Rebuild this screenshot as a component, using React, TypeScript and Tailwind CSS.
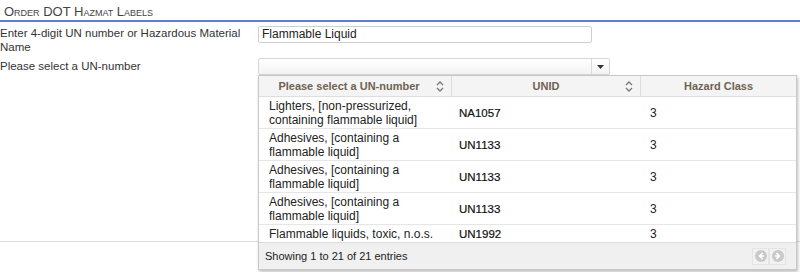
import React from "react";

const rows = [
  { name: "Lighters, [non-pressurized, containing flammable liquid]", unid: "NA1057", cls: "3" },
  { name: "Adhesives, [containing a flammable liquid]", unid: "UN1133", cls: "3" },
  { name: "Adhesives, [containing a flammable liquid]", unid: "UN1133", cls: "3" },
  { name: "Adhesives, [containing a flammable liquid]", unid: "UN1133", cls: "3" },
  { name: "Flammable liquids, toxic, n.o.s.", unid: "UN1992", cls: "3" },
];

function SortIcon() {
  return (
    <svg width="8" height="11" viewBox="0 0 8 11" className="absolute right-[7px] top-[5px]">
      <path d="M1 4 L4 1 L7 4" fill="none" stroke="#777" strokeWidth="1.3" />
      <path d="M1 7 L4 10 L7 7" fill="none" stroke="#777" strokeWidth="1.3" />
    </svg>
  );
}

function NavButton({ dir }: { dir: "left" | "right" }) {
  return (
    <div className="w-[17px] h-[17px] flex items-center justify-center border border-[#e4e4e4] bg-[#f2f2f2]">
      <svg width="12" height="12" viewBox="0 0 12 12">
        <circle cx="6" cy="6" r="6" fill="#c9c9c9" />
        {dir === "left" ? (
          <path d="M7.5 3 L4.5 6 L7.5 9 M4.5 6 H9" fill="none" stroke="#fff" strokeWidth="1.6" />
        ) : (
          <path d="M4.5 3 L7.5 6 L4.5 9 M7.5 6 H3" fill="none" stroke="#fff" strokeWidth="1.6" />
        )}
      </svg>
    </div>
  );
}

export default function App() {
  return (
    <div className="w-[800px] h-[272px] bg-white text-[11px] leading-[14px] text-[#333] font-['Liberation_Sans',Arial,sans-serif] overflow-hidden">
      <div className="h-[22px] border-b-2 border-[#5b80d3] px-[4px] pt-[5px]">
        <span className="text-[13px] leading-[14px] text-[#444] [font-variant:small-caps]">
          Order DOT Hazmat Labels
        </span>
      </div>

      <div className="h-[220px] border-b border-[#dcdcdc] pt-[4px]">
        <div className="grid grid-cols-[258px_1fr]">
          <div className="text-[11.5px]">Enter 4-digit UN number or Hazardous Material Name</div>
          <div>
            <div className="w-[334px] h-[17px] border border-[#cfcfcf] rounded-[2px] px-[3px] text-[12px] leading-[15px] text-[#222]">
              Flammable Liquid
            </div>
          </div>
        </div>

        <div className="grid grid-cols-[258px_1fr] mt-[4px]">
          <div className="pt-[1px] text-[11.5px]">Please select a UN-number</div>
          <div className="relative">
            <div className="w-[352px] h-[17px] border border-[#d6d6d6] rounded-[2px] bg-gradient-to-b from-white to-[#f3f3f3] flex justify-end">
              <div className="w-[18px] h-full border-l border-[#dcdcdc] flex items-center justify-center">
                <svg width="7" height="4" viewBox="0 0 7 4">
                  <path d="M0 0 H7 L3.5 4 Z" fill="#333" />
                </svg>
              </div>
            </div>

            <div className="absolute left-0 top-full z-10 w-[539px] h-[195px] bg-white border border-[#c8c8c8] shadow-[1px_2px_3px_rgba(0,0,0,0.25)] flex flex-col">
              <div className="grid grid-cols-[193px_189px_1fr] h-[21px] bg-[#f4f4f4] border-b border-[#dedede] font-bold text-[#6f6252] shrink-0">
                <div className="relative border-r border-[#dedede] text-center leading-[20px] pr-[12px]">
                  Please select a UN-number
                  <SortIcon />
                </div>
                <div className="relative border-r border-[#dedede] text-center leading-[20px]">
                  UNID
                  <SortIcon />
                </div>
                <div className="text-center leading-[20px]">Hazard Class</div>
              </div>

              <div className="h-[145px] overflow-hidden">
                {rows.map((r, i) => (
                  <div
                    key={i}
                    className="grid grid-cols-[193px_189px_1fr] border-b border-[#e6e6e6] text-[#222]"
                  >
                    <div className="pl-[10px] pr-[8px] pt-[2px] pb-[1px] text-[12px]">{r.name}</div>
                    <div className="pl-[7px] flex items-center text-[11.5px] text-[#111] [-webkit-text-stroke:0.2px_#111]">
                      {r.unid}
                    </div>
                    <div className="pl-[9px] flex items-center text-[12px]">{r.cls}</div>
                  </div>
                ))}
              </div>

              <div className="flex-1 bg-[#f0f0f0] border-t border-[#dcdcdc] flex items-center justify-between pl-[6px] pr-[10px]">
                <span className="text-[#222]">Showing 1 to 21 of 21 entries</span>
                <div className="flex">
                  <NavButton dir="left" />
                  <NavButton dir="right" />
                </div>
              </div>
            </div>
          </div>
        </div>
      </div>
    </div>
  );
}
